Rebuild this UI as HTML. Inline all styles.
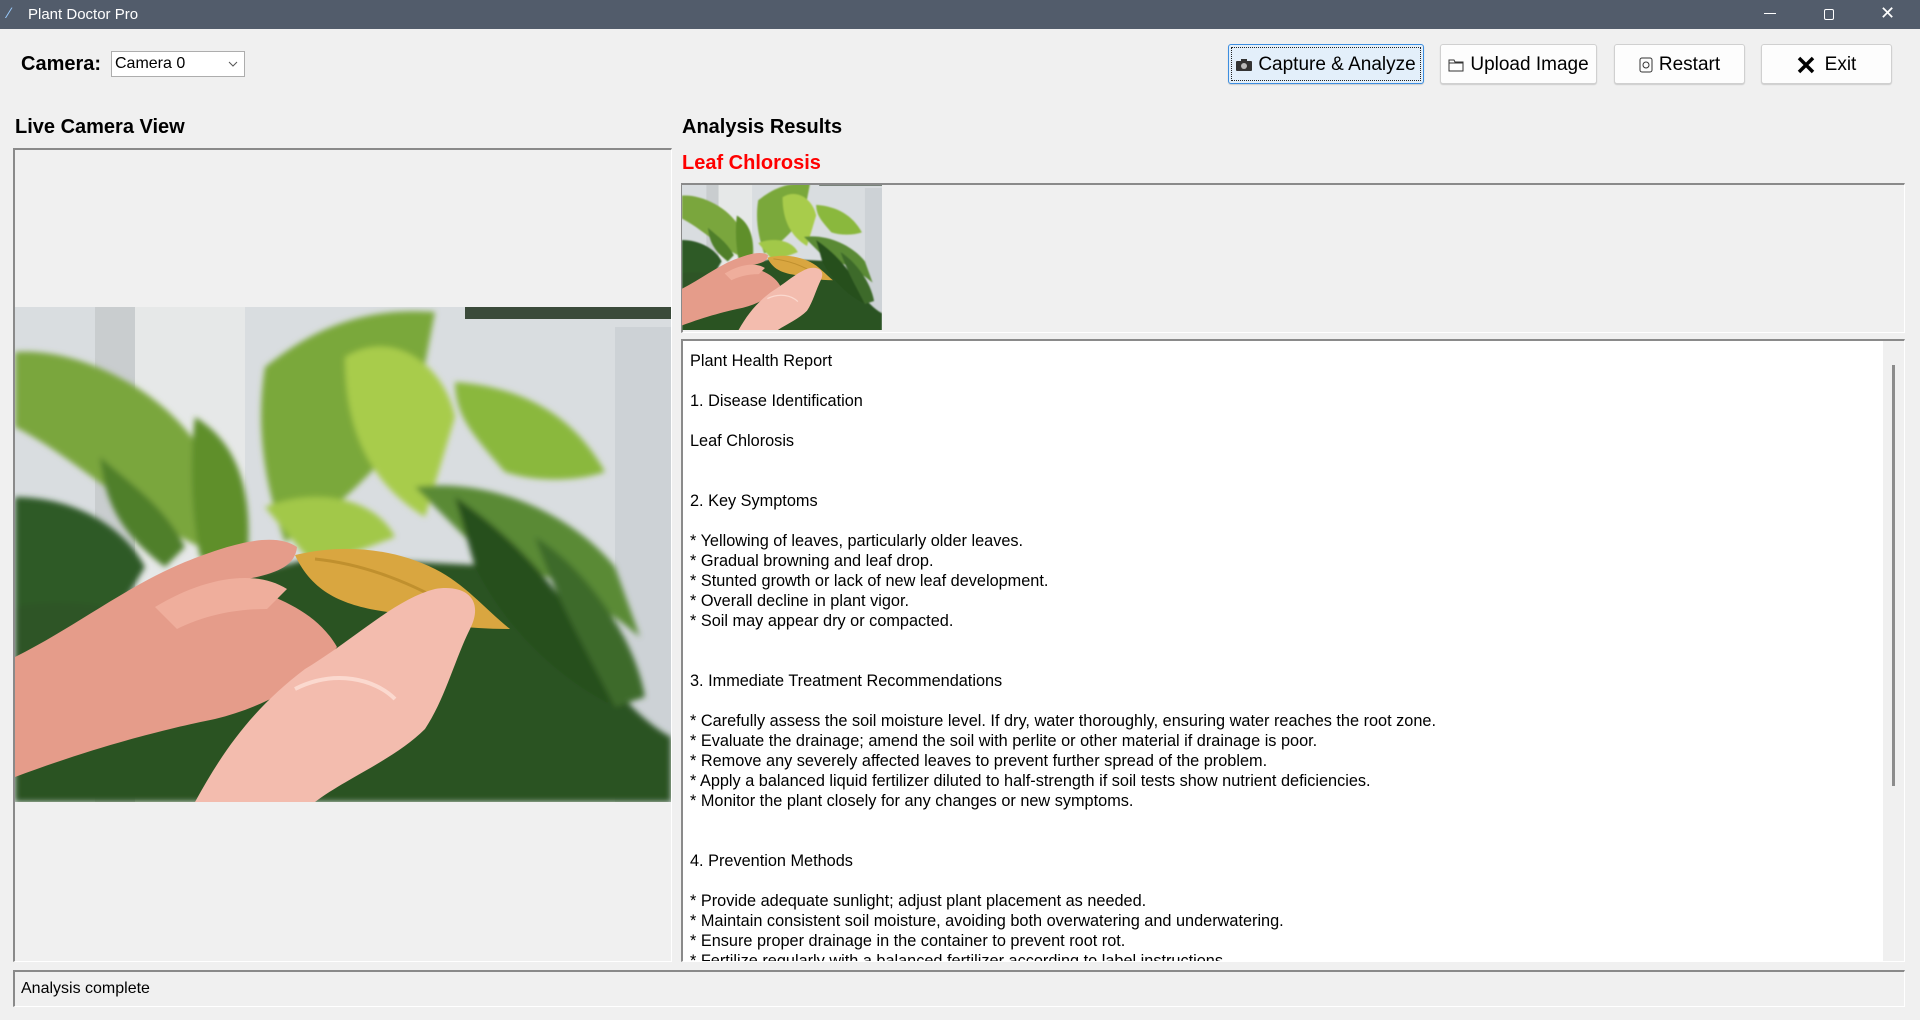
<!DOCTYPE html>
<html><head><meta charset="utf-8"><style>
*{margin:0;padding:0;box-sizing:border-box}
body{width:1920px;height:1020px;background:#f0f0f0;font-family:"Liberation Sans",Arial,sans-serif;position:relative;overflow:hidden;color:#000}
.abs{position:absolute}
.title{left:0;top:0;width:1920px;height:29px;background:#525c6b;color:#fff;font-size:15px}
.btn{position:absolute;top:44px;height:40px;background:#fdfdfd;border:1px solid #d0d0d0;border-radius:3px;font-size:19px;display:flex;align-items:center;justify-content:center;gap:6px;box-shadow:0 1px 1px #ccc}
.sunk{border-top:2px solid #8a8a8a;border-left:2px solid #8a8a8a;border-right:1px solid #fff;border-bottom:1px solid #fff}
pre{font-family:"Liberation Sans",Arial,sans-serif;font-size:16.3px;line-height:20px}
</style></head><body>
<svg width="0" height="0" style="position:absolute"><defs>
<filter id="bl"><feGaussianBlur stdDeviation="3"/></filter>
<symbol id="ph" viewBox="0 0 656 495">
<rect width="656" height="495" fill="#d9dde0"/>
<rect x="80" y="0" width="40" height="495" fill="#c9cdcf"/>
<rect x="120" y="0" width="110" height="495" fill="#e6e8e8"/>
<rect x="600" y="20" width="56" height="475" fill="#cdd2d6"/>
<rect x="450" y="0" width="206" height="12" fill="#3a4a3a"/>
<g filter="url(#bl)">
<path d="M0 330 L0 495 L656 495 L656 430 C600 400 560 320 500 260 L300 250 Z" fill="#2c5224"/>
<path d="M0 45 C60 40 150 80 190 150 L185 240 C120 210 60 150 0 120Z" fill="#7aa63e"/>
<path d="M0 190 C60 190 110 220 130 260 L100 310 C60 300 20 300 0 300Z" fill="#2f5a26"/>
<path d="M85 150 C120 180 150 200 170 240 L150 260 C110 230 90 200 85 150Z" fill="#4f7f2a"/>
<path d="M180 110 C230 140 240 200 230 270 L185 250 C175 200 175 150 180 110Z" fill="#5f8f2c"/>
<path d="M250 60 C300 20 350 0 420 5 L400 110 C360 170 310 210 270 235 C250 180 240 120 250 60Z" fill="#7aa83a"/>
<path d="M330 50 C380 20 430 60 440 110 L410 210 C360 180 330 130 330 50Z" fill="#a8cc4c"/>
<path d="M440 75 C510 80 560 110 590 165 C560 175 520 175 490 165 C460 130 440 110 440 75Z" fill="#8ab83e"/>
<path d="M400 180 C480 170 560 210 600 260 L625 330 C590 300 530 260 470 250Z" fill="#5a8a34"/>
<path d="M440 190 C500 230 570 300 600 400 C540 370 490 320 460 260Z" fill="#27501f"/>
<path d="M520 230 C570 260 620 330 630 390 L600 400 C570 340 540 290 520 230Z" fill="#3e6a2c"/>
<path d="M250 200 C300 180 360 190 380 230 L300 260 Z" fill="#a2c84a"/>
<path d="M0 300 C60 290 120 300 140 330 L90 380 L0 400Z" fill="#2e5525"/>
</g>
<path d="M0 350 C60 320 110 280 170 255 C220 235 260 225 282 240 C280 262 255 268 222 274 C262 292 300 302 322 340 C300 372 250 400 200 412 C150 422 80 440 0 470Z" fill="#e59c8a"/>
<path d="M140 300 C190 270 240 262 272 282 L252 302 C212 302 182 312 162 322Z" fill="#efae9c"/>
<path d="M280 248 C330 236 380 242 420 262 C450 277 470 302 495 322 C450 322 420 317 390 307 C340 302 300 292 280 248Z" fill="#d9a640"/>
<path d="M300 252 C350 257 400 277 440 302" stroke="#c0902e" stroke-width="3" fill="none"/>
<path d="M180 495 C210 440 240 400 290 362 C340 332 380 292 420 282 C450 277 470 292 455 322 C440 352 430 392 410 422 C380 452 330 472 300 495Z" fill="#f3bcae"/>
<path d="M280 382 C320 362 360 372 380 392" stroke="#fbd9cf" stroke-width="4" fill="none"/>
</symbol></defs></svg>

<div class="abs title">
<span class="abs" style="left:8px;top:5px;font-size:15px;color:#9cf">&#x2215;</span>
<span class="abs" style="left:28px;top:6px">Plant Doctor Pro</span>
<span class="abs" style="left:1764px;top:13px;width:12px;height:1px;background:#fff"></span>
<span class="abs" style="left:1824px;top:9px;width:10px;height:11px;border:1px solid #fff;border-radius:2px"></span>
<span class="abs" style="left:1880px;top:3px;font-size:18px">&#x2715;</span>
</div>

<div class="abs" style="left:21px;top:53px;font-size:20px;font-weight:bold">Camera:</div>
<div class="abs" style="left:111px;top:51px;width:134px;height:26px;background:#fff;border:1px solid #adadad;font-size:16px;padding:3px 0 0 3px">Camera 0
<svg class="abs" style="left:116px;top:9px" width="10" height="6"><path d="M1 1L5 5L9 1" stroke="#555" fill="none"/></svg></div>

<div class="btn" style="left:1228px;width:196px;background:#e3effa;border:1px solid #3d8ee0;outline:1px dotted #222;outline-offset:-4px;padding-top:2px">
<svg width="16" height="12"><rect x="0" y="2" width="16" height="10" rx="1" fill="#333"/><rect x="5" y="0" width="6" height="3" fill="#333"/><circle cx="8" cy="7" r="3" fill="#bbb"/></svg>Capture &amp; Analyze</div>
<div class="btn" style="left:1440px;width:157px;padding-top:2px">
<svg width="16" height="14"><path d="M1 2H6L7 4H15V13H1Z" fill="none" stroke="#333"/><path d="M1 5H15" stroke="#333"/></svg>Upload Image</div>
<div class="btn" style="left:1614px;width:131px;padding-top:2px">
<svg width="14" height="16"><rect x="1" y="1" width="12" height="14" rx="2" fill="none" stroke="#333"/><circle cx="7" cy="8" r="3" fill="none" stroke="#333"/></svg>Restart</div>
<div class="btn" style="left:1761px;width:131px;gap:10px;padding-top:2px">
<svg width="18" height="18"><path d="M2 2L16 16M16 2L2 16" stroke="#000" stroke-width="3.5"/></svg>Exit</div>

<div class="abs" style="left:15px;top:116px;font-size:20px;font-weight:bold">Live Camera View</div>
<div class="abs sunk" style="left:13px;top:148px;width:659px;height:814px"></div>
<svg class="abs" style="left:15px;top:307px" width="656" height="495"><use href="#ph" width="656" height="495"/></svg>

<div class="abs" style="left:682px;top:116px;font-size:20px;font-weight:bold">Analysis Results</div>
<div class="abs" style="left:682px;top:152px;font-size:20px;font-weight:bold;color:#f00">Leaf Chlorosis</div>
<div class="abs sunk" style="left:681px;top:183px;width:1224px;height:150px"></div>
<svg class="abs" style="left:682px;top:185px" width="200" height="145" viewBox="0 10 656 475" preserveAspectRatio="none"><use href="#ph" width="656" height="495"/></svg>

<div class="abs sunk" style="left:681px;top:339px;width:1224px;height:623px;background:#fff;overflow:hidden">
<div class="abs" style="right:0;top:0;width:21px;height:100%;background:#f0f0f0"></div>
<div class="abs" style="right:9px;top:24px;width:3px;height:421px;background:#8c8c8c"></div>
<pre class="abs" style="left:7px;top:10px">Plant Health Report

1. Disease Identification

Leaf Chlorosis


2. Key Symptoms

* Yellowing of leaves, particularly older leaves.
* Gradual browning and leaf drop.
* Stunted growth or lack of new leaf development.
* Overall decline in plant vigor.
* Soil may appear dry or compacted.


3. Immediate Treatment Recommendations

* Carefully assess the soil moisture level. If dry, water thoroughly, ensuring water reaches the root zone.
* Evaluate the drainage; amend the soil with perlite or other material if drainage is poor.
* Remove any severely affected leaves to prevent further spread of the problem.
* Apply a balanced liquid fertilizer diluted to half-strength if soil tests show nutrient deficiencies.
* Monitor the plant closely for any changes or new symptoms.


4. Prevention Methods

* Provide adequate sunlight; adjust plant placement as needed.
* Maintain consistent soil moisture, avoiding both overwatering and underwatering.
* Ensure proper drainage in the container to prevent root rot.
* Fertilize regularly with a balanced fertilizer according to label instructions.</pre>
</div>

<div class="abs sunk" style="left:13px;top:970px;width:1892px;height:37px"></div>
<div class="abs" style="left:21px;top:980px;font-size:16px">Analysis complete</div>
</body></html>
